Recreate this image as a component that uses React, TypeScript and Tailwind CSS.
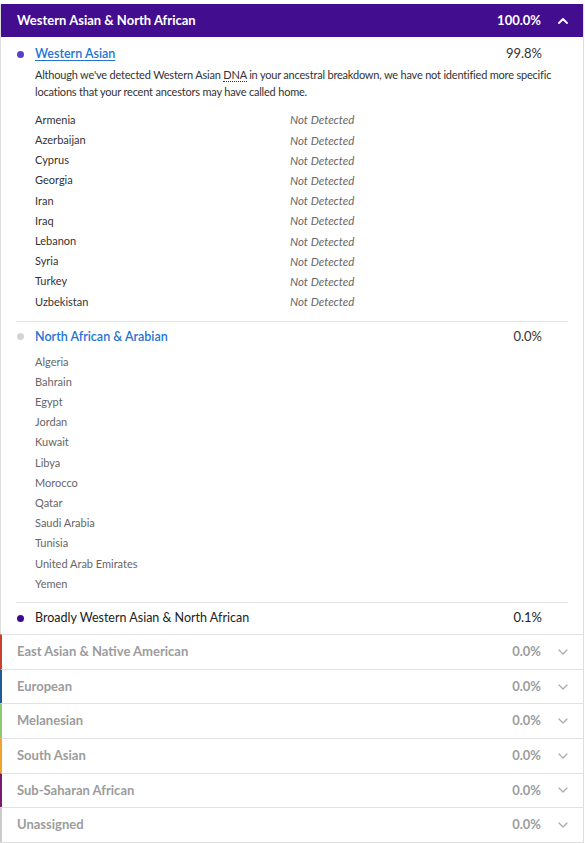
import React from 'react'

const westernAsian = ['Armenia', 'Azerbaijan', 'Cyprus', 'Georgia', 'Iran', 'Iraq', 'Lebanon', 'Syria', 'Turkey', 'Uzbekistan']
const northAfrican = ['Algeria', 'Bahrain', 'Egypt', 'Jordan', 'Kuwait', 'Libya', 'Morocco', 'Qatar', 'Saudi Arabia', 'Tunisia', 'United Arab Emirates', 'Yemen']

const collapsed = [
  { name: 'East Asian & Native American', color: 'border-l-[#c9412f]' },
  { name: 'European', color: 'border-l-[#1e5b98]' },
  { name: 'Melanesian', color: 'border-l-[#8cc86f]' },
  { name: 'South Asian', color: 'border-l-[#f0a12e]' },
  { name: 'Sub-Saharan African', color: 'border-l-[#7a1b6b]' },
  { name: 'Unassigned', color: 'border-l-[#cccccc]' },
]

function Chevron({ up, className }: { up?: boolean; className?: string }) {
  return (
    <svg width="10" height="6" viewBox="0 0 10 6" className={className}>
      <path
        d={up ? 'M1 5 L5 1 L9 5' : 'M1 1 L5 5 L9 1'}
        fill="none"
        stroke="currentColor"
        strokeWidth={up ? 1.8 : 1.2}
        strokeLinecap="round"
        strokeLinejoin="round"
      />
    </svg>
  )
}

export default function App() {
  return (
    <div className="min-h-screen bg-white pt-[4px] font-['Lato','Noto_Sans',sans-serif] text-[#333]">
      <div className="w-[584px] border border-t-0 border-[#dddddd]">
        {/* Header */}
        <div className="h-[33px] bg-[#430d90] flex items-center pl-[16px] pr-[15px] text-white">
          <span className="flex-1 text-[13px] font-bold">Western Asian &amp; North African</span>
          <span className="text-[13px] font-bold">100.0%</span>
          <span className="w-[27px] flex justify-end">
            <Chevron up className="text-white" />
          </span>
        </div>

        <div className="px-[15px]">
          {/* Western Asian */}
          <div className="pt-[8px] pb-[9px] border-b border-[#e2e2e2]">
            <div className="h-[18px] flex items-center">
              <span className="w-[19px] flex">
                <span className="w-[7px] h-[7px] rounded-full bg-[#5b3fc4] ml-[1px]" />
              </span>
              <span className="flex-1 text-[12.5px] font-semibold text-[#2473d6] underline underline-offset-2">Western Asian</span>
              <span className="text-[13px] text-[#333] pr-[26px]">99.8%</span>
            </div>
            <p className="mt-[3px] pl-[19px] text-[11px] tracking-[-0.2px] leading-[17px] text-[#333]">
              Although we've detected Western Asian{' '}
              <span className="border-b border-dotted border-[#333]">DNA</span> in your ancestral breakdown, we have not identified more specific locations that your recent ancestors may have called home.
            </p>
            <div className="mt-[10px] pl-[19px]">
              {westernAsian.map((c) => (
                <div key={c} className="h-[20.2px] flex items-center">
                  <span className="w-[255px] text-[11px] text-[#333]">{c}</span>
                  <span className="text-[11.5px] italic text-[#666]">Not Detected</span>
                </div>
              ))}
            </div>
          </div>

          {/* North African & Arabian */}
          <div className="pt-[6px] pb-[8px] border-b border-[#e2e2e2]">
            <div className="h-[18px] flex items-center">
              <span className="w-[19px] flex">
                <span className="w-[7px] h-[7px] rounded-full bg-[#d4d4d4] ml-[1px]" />
              </span>
              <span className="flex-1 text-[12.5px] font-semibold text-[#2473d6]">North African &amp; Arabian</span>
              <span className="text-[13px] text-[#333] pr-[26px]">0.0%</span>
            </div>
            <div className="mt-[6px] pl-[19px]">
              {northAfrican.map((c) => (
                <div key={c} className="h-[20.2px] flex items-center text-[11px] text-[#666]">
                  {c}
                </div>
              ))}
            </div>
          </div>

          {/* Broadly */}
          <div className="pt-[6px] pb-[7px]">
            <div className="h-[18px] flex items-center">
              <span className="w-[19px] flex">
                <span className="w-[7px] h-[7px] rounded-full bg-[#3d0a8e] ml-[1px]" />
              </span>
              <span className="flex-1 text-[12.5px] text-[#222]">Broadly Western Asian &amp; North African</span>
              <span className="text-[13px] text-[#222] pr-[26px]">0.1%</span>
            </div>
          </div>
        </div>

        {/* Collapsed populations */}
        {collapsed.map((p) => (
          <div
            key={p.name}
            className={`h-[34.6px] flex items-center border-t border-[#e2e2e2] border-l-2 -ml-px pl-[15px] pr-[15px] ${p.color}`}
          >
            <span className="flex-1 text-[13px] font-bold text-[#9c9c9c]">{p.name}</span>
            <span className="text-[13px] font-bold text-[#9c9c9c]">0.0%</span>
            <span className="w-[27px] flex justify-end">
              <Chevron className="text-[#aaaaaa]" />
            </span>
          </div>
        ))}
      </div>
    </div>
  )
}
